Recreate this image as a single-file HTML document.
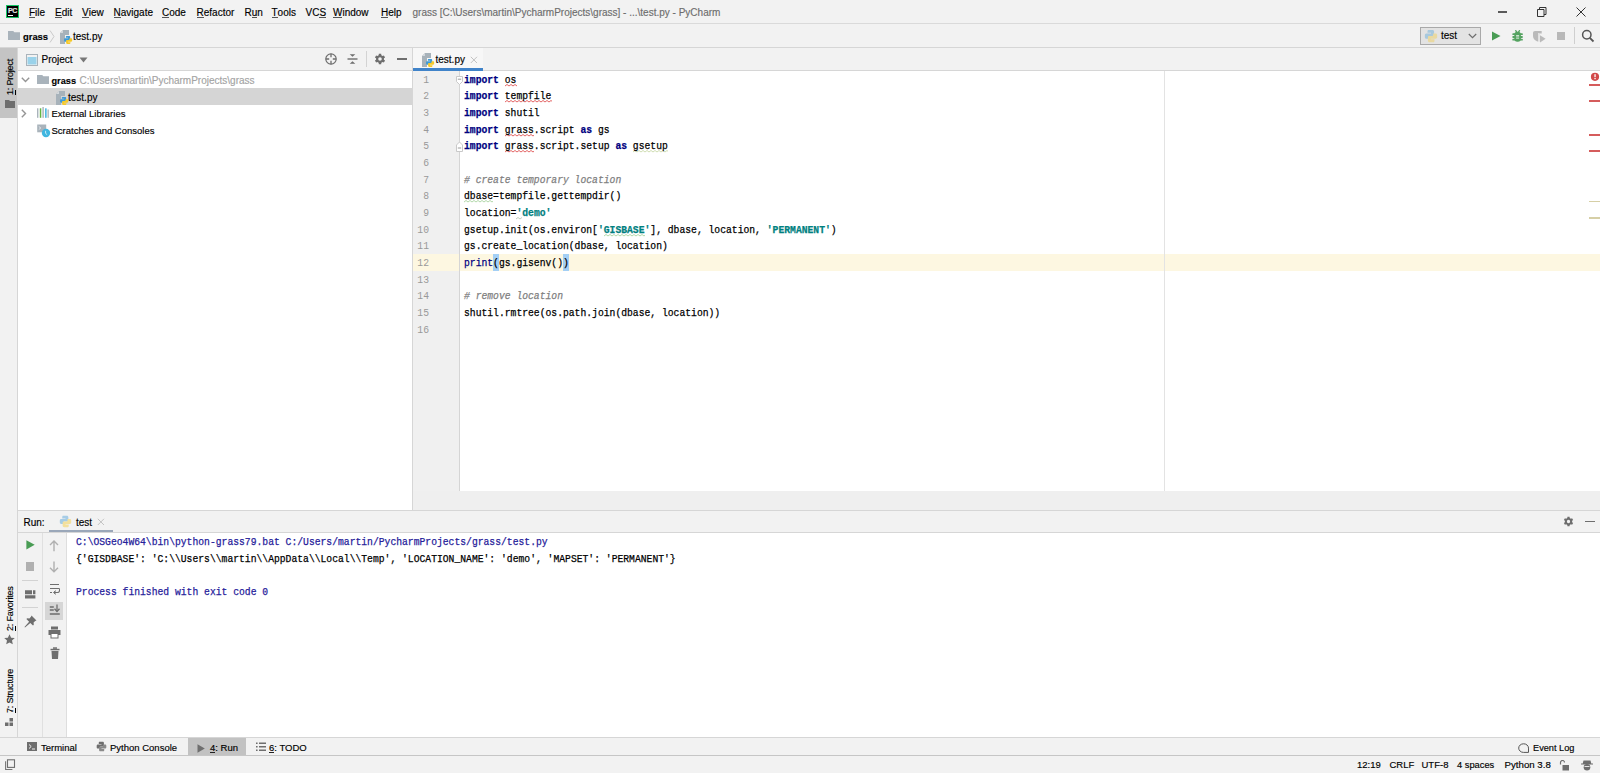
<!DOCTYPE html>
<html><head><meta charset="utf-8">
<style>
*{margin:0;padding:0;box-sizing:border-box}
html,body{width:1600px;height:773px;overflow:hidden;background:#f2f2f2;font-family:"Liberation Sans",sans-serif;font-size:10px;color:#000}
.a{position:absolute}
.t{position:absolute;white-space:pre;line-height:10px;font-size:10px;-webkit-text-stroke:0.15px currentColor}
.hl{position:absolute;background:#d6d6d6}
.m u{text-decoration:none;display:inline-block;line-height:9.2px;border-bottom:1px solid #555}
.code{position:absolute;left:464px;white-space:pre;-webkit-text-stroke:0.25px currentColor;font-family:"Liberation Mono",monospace;font-size:11px;line-height:11px;transform:scaleX(0.882);transform-origin:0 0;color:#000}
.k{color:#000080;font-weight:bold}
.s{color:#008080;font-weight:bold}
.c{color:#808080;font-style:italic}
.ln{position:absolute;left:412px;width:17px;text-align:right;font-family:"Liberation Mono",monospace;font-size:11px;line-height:11px;color:#999;transform:scaleX(0.882);transform-origin:100% 0}
.cons{position:absolute;left:76px;white-space:pre;-webkit-text-stroke:0.25px currentColor;font-family:"Liberation Mono",monospace;font-size:11px;line-height:11px;transform:scaleX(0.882);transform-origin:0 0}
</style></head><body>
<!-- ============ menu bar ============ -->
<div class="hl" style="left:0;top:23px;width:1600px;height:1px;background:#dadada"></div>
<div class="a" style="left:6px;top:5px;width:13px;height:13px;background:#000;border:1px solid #18c566"></div>
<div class="t" style="left:8px;top:6.5px;font-size:7px;line-height:7px;color:#e6e6e6;font-weight:bold;letter-spacing:-0.3px">PC</div>
<div class="a" style="left:8px;top:15px;width:5px;height:1px;background:#fff"></div>
<div class="m">
<div class="t" style="left:29px;top:7.5px"><u>F</u>ile</div>
<div class="t" style="left:55px;top:7.5px"><u>E</u>dit</div>
<div class="t" style="left:82px;top:7.5px"><u>V</u>iew</div>
<div class="t" style="left:113.5px;top:7.5px"><u>N</u>avigate</div>
<div class="t" style="left:162px;top:7.5px"><u>C</u>ode</div>
<div class="t" style="left:196.5px;top:7.5px"><u>R</u>efactor</div>
<div class="t" style="left:244.5px;top:7.5px">R<u>u</u>n</div>
<div class="t" style="left:271.5px;top:7.5px"><u>T</u>ools</div>
<div class="t" style="left:305.5px;top:7.5px">VC<u>S</u></div>
<div class="t" style="left:333px;top:7.5px"><u>W</u>indow</div>
<div class="t" style="left:381px;top:7.5px"><u>H</u>elp</div>
</div>
<div class="t" style="left:412.5px;top:7.5px;color:#6d6d6d">grass [C:\Users\martin\PycharmProjects\grass] - ...\test.py - PyCharm</div>

<!-- ============ nav bar ============ -->
<div class="hl" style="left:0;top:47px;width:1600px;height:1px"></div>
<div class="t" style="left:23px;top:32px;font-weight:bold;font-size:9.4px">grass</div>
<div class="t" style="left:73px;top:32px">test.py</div>
<!-- run config -->
<div class="a" style="left:1420px;top:27px;width:61px;height:18px;background:#e3e3e3;border:1px solid #a9a9a9"></div>
<div class="t" style="left:1441px;top:31px">test</div>

<!-- ============ left strip ============ -->
<div class="hl" style="left:17px;top:48px;width:1px;height:689px"></div>
<div class="a" style="left:0;top:48px;width:17px;height:70px;background:#c4c4c4"></div>

<!-- ============ project panel ============ -->
<div class="a" style="left:18px;top:71px;width:394px;height:439px;background:#fff"></div>
<div class="hl" style="left:18px;top:70px;width:394px;height:1px"></div>
<div class="a" style="left:18px;top:88px;width:394px;height:17px;background:#d5d5d5"></div>
<div class="t" style="left:41.5px;top:55px">Project</div>
<div class="t" style="left:51.5px;top:75.5px;font-weight:bold;font-size:9.2px">grass</div>
<div class="t" style="left:79.5px;top:75.5px;color:#a3a3a3">C:\Users\martin\PycharmProjects\grass</div>
<div class="t" style="left:68px;top:92.7px">test.py</div>
<div class="t" style="left:51.5px;top:108.5px;font-size:9.5px">External Libraries</div>
<div class="t" style="left:51.5px;top:125.5px;font-size:9.5px">Scratches and Consoles</div>

<!-- divider -->
<div class="hl" style="left:412px;top:48px;width:1px;height:462px"></div>

<!-- ============ editor ============ -->
<div class="a" style="left:413px;top:71px;width:1187px;height:420px;background:#fff"></div>
<div class="a" style="left:413px;top:71px;width:46px;height:420px;background:#f0f0f0"></div>
<div class="a" style="left:413px;top:254px;width:1187px;height:17px;background:#fdf7e1"></div>
<div class="hl" style="left:459px;top:71px;width:1px;height:420px;background:#d5d5d5"></div>
<div class="hl" style="left:1164px;top:71px;width:1px;height:420px;background:#e3e3e3"></div>
<div class="hl" style="left:413px;top:70px;width:1187px;height:1px"></div>
<div class="a" style="left:413px;top:68px;width:70px;height:3px;background:#4083c9"></div>
<div class="a" style="left:413px;top:48px;width:70px;height:20px;background:#f7f7f7"></div>
<div class="t" style="left:435.5px;top:55px">test.py</div>
<div class="a" style="left:413px;top:491px;width:1187px;height:19px;background:#efefef"></div>

<!-- waves -->
<div class="a" style="left:493.1px;top:254px;width:5.8px;height:16.7px;background:#a3cff5"></div>
<div class="a" style="left:562.9px;top:254px;width:5.8px;height:16.7px;background:#a3cff5"></div>
<svg class="a" style="left:504.7px;top:83.5px;opacity:1" width="12" height="3"><path d="M0 2 L2 0.5 L4 2 L6 0.5 L8 2 L10 0.5 L12 2" fill="none" stroke="#e05555" stroke-width="0.9"/></svg>
<svg class="a" style="left:504.7px;top:100.2px;opacity:1" width="47" height="3"><path d="M0 2 L2 0.5 L4 2 L6 0.5 L8 2 L10 0.5 L12 2 L14 0.5 L16 2 L18 0.5 L20 2 L22 0.5 L24 2 L26 0.5 L28 2 L30 0.5 L32 2 L34 0.5 L36 2 L38 0.5 L40 2 L42 0.5 L44 2 L46 0.5 L48 2" fill="none" stroke="#e05555" stroke-width="0.9"/></svg>
<svg class="a" style="left:504.7px;top:133.5px;opacity:1" width="29" height="3"><path d="M0 2 L2 0.5 L4 2 L6 0.5 L8 2 L10 0.5 L12 2 L14 0.5 L16 2 L18 0.5 L20 2 L22 0.5 L24 2 L26 0.5 L28 2 L30 0.5" fill="none" stroke="#e05555" stroke-width="0.9"/></svg>
<svg class="a" style="left:504.7px;top:150.2px;opacity:1" width="29" height="3"><path d="M0 2 L2 0.5 L4 2 L6 0.5 L8 2 L10 0.5 L12 2 L14 0.5 L16 2 L18 0.5 L20 2 L22 0.5 L24 2 L26 0.5 L28 2 L30 0.5" fill="none" stroke="#e05555" stroke-width="0.9"/></svg>
<svg class="a" style="left:464.0px;top:200.2px;opacity:1" width="29" height="3"><path d="M0 2 L2 0.5 L4 2 L6 0.5 L8 2 L10 0.5 L12 2 L14 0.5 L16 2 L18 0.5 L20 2 L22 0.5 L24 2 L26 0.5 L28 2 L30 0.5" fill="none" stroke="#a9d4a0" stroke-width="0.9"/></svg>
<svg class="a" style="left:516.4px;top:216.8px;opacity:1" width="6" height="3"><path d="M0 2 L2 0.5 L4 2 L6 0.5" fill="none" stroke="#b8c8b8" stroke-width="0.9"/></svg>
<svg class="a" style="left:603.7px;top:233.5px;opacity:1" width="41" height="3"><path d="M0 2 L2 0.5 L4 2 L6 0.5 L8 2 L10 0.5 L12 2 L14 0.5 L16 2 L18 0.5 L20 2 L22 0.5 L24 2 L26 0.5 L28 2 L30 0.5 L32 2 L34 0.5 L36 2 L38 0.5 L40 2 L42 0.5" fill="none" stroke="#a9d4a0" stroke-width="0.9"/></svg>
<svg class="a" style="left:632.8px;top:150.2px" width="35" height="3"><path d="M0 2 L2 0.5 L4 2 L6 0.5 L8 2 L10 0.5 L12 2 L14 0.5 L16 2 L18 0.5 L20 2 L22 0.5 L24 2 L26 0.5 L28 2 L30 0.5 L32 2 L34 0.5 L36 2" fill="none" stroke="#c9d9a9" stroke-width="0.9"/></svg>
<!-- code -->
<div class="code" style="top:74.7px"><span class="k">import</span> os</div>
<div class="code" style="top:91.4px"><span class="k">import</span> tempfile</div>
<div class="code" style="top:108.0px"><span class="k">import</span> shutil</div>
<div class="code" style="top:124.7px"><span class="k">import</span> grass.script <span class="k">as</span> gs</div>
<div class="code" style="top:141.4px"><span class="k">import</span> grass.script.setup <span class="k">as</span> gsetup</div>
<div class="code" style="top:174.7px"><span class="c"># create temporary location</span></div>
<div class="code" style="top:191.4px">dbase=tempfile.gettempdir()</div>
<div class="code" style="top:208.0px">location=<span class="s">'demo'</span></div>
<div class="code" style="top:224.7px">gsetup.init(os.environ[<span class="s">'GISBASE'</span>], dbase, location, <span class="s">'PERMANENT'</span>)</div>
<div class="code" style="top:241.4px">gs.create_location(dbase, location)</div>
<div class="code" style="top:258.0px"><span style="color:#000080">print</span>(gs.gisenv())</div>
<div class="code" style="top:291.4px"><span class="c"># remove location</span></div>
<div class="code" style="top:308.0px">shutil.rmtree(os.path.join(dbase, location))</div>

<div class="ln" style="top:74.7px">1</div>
<div class="ln" style="top:91.4px">2</div>
<div class="ln" style="top:108.0px">3</div>
<div class="ln" style="top:124.7px">4</div>
<div class="ln" style="top:141.4px">5</div>
<div class="ln" style="top:158.0px">6</div>
<div class="ln" style="top:174.7px">7</div>
<div class="ln" style="top:191.4px">8</div>
<div class="ln" style="top:208.0px">9</div>
<div class="ln" style="top:224.7px">10</div>
<div class="ln" style="top:241.4px">11</div>
<div class="ln" style="top:258.0px">12</div>
<div class="ln" style="top:274.7px">13</div>
<div class="ln" style="top:291.4px">14</div>
<div class="ln" style="top:308.0px">15</div>
<div class="ln" style="top:324.7px">16</div>

<!-- ============ run panel ============ -->
<div class="hl" style="left:18px;top:510px;width:1582px;height:1px"></div>
<div class="hl" style="left:18px;top:532px;width:1582px;height:1px"></div>
<div class="a" style="left:67px;top:533px;width:1533px;height:204px;background:#fff"></div>
<div class="hl" style="left:42px;top:533px;width:1px;height:204px;background:#e0e0e0"></div>
<div class="hl" style="left:66px;top:533px;width:1px;height:204px;background:#dedede"></div>
<div class="t" style="left:23.5px;top:518px">Run:</div>
<div class="t" style="left:76px;top:518px">test</div>
<div class="a" style="left:49px;top:530px;width:64px;height:2px;background:#9aa7b9"></div>

<div class="cons" style="top:536.8px;color:#25209a">C:\OSGeo4W64\bin\python-grass79.bat C:/Users/martin/PycharmProjects/grass/test.py</div>
<div class="cons" style="top:553.6px">{'GISDBASE': 'C:\\Users\\martin\\AppData\\Local\\Temp', 'LOCATION_NAME': 'demo', 'MAPSET': 'PERMANENT'}</div>
<div class="cons" style="top:586.8px;color:#25209a">Process finished with exit code 0</div>

<!-- ============ bottom bar ============ -->
<div class="hl" style="left:0;top:737px;width:1600px;height:1px"></div>
<div class="a" style="left:188px;top:738px;width:58px;height:17px;background:#c2c2c2"></div>
<div class="hl" style="left:0;top:755px;width:1600px;height:1px;background:#c6c6c6"></div>
<div class="t" style="left:41px;top:743px;font-size:9.5px">Terminal</div>
<div class="t" style="left:110px;top:743px;font-size:9.5px">Python Console</div>
<div class="t" style="left:210px;top:743px;font-size:9.5px"><u style="text-decoration:none;display:inline-block;line-height:9px;border-bottom:1px solid #222">4</u>: Run</div>
<div class="t" style="left:269px;top:743px;font-size:9.5px"><u style="text-decoration:none;display:inline-block;line-height:9px;border-bottom:1px solid #222">6</u>: TODO</div>
<div class="t" style="left:1533px;top:743px;font-size:9.2px">Event Log</div>

<!-- status -->
<div class="t" style="left:1357px;top:759.5px;font-size:9.5px">12:19</div>
<div class="t" style="left:1389.5px;top:759.5px;font-size:9.5px">CRLF</div>
<div class="t" style="left:1421.5px;top:759.5px;font-size:9.5px">UTF-8</div>
<div class="t" style="left:1457px;top:759.5px;font-size:9.3px">4 spaces</div>
<div class="t" style="left:1504.5px;top:759.5px;font-size:9.7px">Python 3.8</div>

<!-- ============ ICONS ============ -->
<svg width="0" height="0" style="position:absolute">
<defs>
<symbol id="py" viewBox="0 0 16 16">
<path fill="#3e9ad6" d="M5 1h4.5C10.9 1 11.5 1.6 11.5 3v3.5c0 1-.6 1.5-1.5 1.5H7C6 8 5.5 8.6 5.5 9.5V11H2.8C1.6 11 1 10.3 1 9V7c0-1.2.6-2 1.8-2H8V4.2H4V3c0-1.3.4-2 1-2z"/>
<path fill="#f6c929" transform="rotate(180 8 8)" d="M5 1h4.5C10.9 1 11.5 1.6 11.5 3v3.5c0 1-.6 1.5-1.5 1.5H7C6 8 5.5 8.6 5.5 9.5V11H2.8C1.6 11 1 10.3 1 9V7c0-1.2.6-2 1.8-2H8V4.2H4V3c0-1.3.4-2 1-2z"/>
</symbol>
<symbol id="pyfile" viewBox="0 0 13 14">
<path fill="#a7b2ba" d="M3 0h6v5H5v9H0V3z"/>
<path fill="#d3d8dc" d="M0 3h3V0z"/>
<g transform="translate(3.5 5.3) scale(0.58)"><use href="#py" width="16" height="16"/></g>
</symbol>
<symbol id="pyg" viewBox="0 0 16 16">
<path fill="#6e6e6e" d="M5 1h4.5C10.9 1 11.5 1.6 11.5 3v3.5c0 1-.6 1.5-1.5 1.5H7C6 8 5.5 8.6 5.5 9.5V11H2.8C1.6 11 1 10.3 1 9V7c0-1.2.6-2 1.8-2H8V4.2H4V3c0-1.3.4-2 1-2z"/>
<path fill="#8a8a8a" transform="rotate(180 8 8)" d="M5 1h4.5C10.9 1 11.5 1.6 11.5 3v3.5c0 1-.6 1.5-1.5 1.5H7C6 8 5.5 8.6 5.5 9.5V11H2.8C1.6 11 1 10.3 1 9V7c0-1.2.6-2 1.8-2H8V4.2H4V3c0-1.3.4-2 1-2z"/>
</symbol>
<symbol id="folder" viewBox="0 0 12 9">
<path fill="#a9b3bb" d="M0 0h5.2l1.2 1.3H12V9H0z"/>
</symbol>
<symbol id="gear" viewBox="-6 -6 12 12">
<path fill="#6e6e6e" fill-rule="evenodd" d="M-1.33 -3.77 L-1.16 -5.17 L1.16 -5.17 L1.33 -3.77 L2.60 -3.04 L3.90 -3.59 L5.06 -1.58 L3.93 -0.73 L3.93 0.73 L5.06 1.58 L3.90 3.59 L2.60 3.04 L1.33 3.77 L1.16 5.17 L-1.16 5.17 L-1.33 3.77 L-2.60 3.04 L-3.90 3.59 L-5.06 1.58 L-3.93 0.73 L-3.93 -0.73 L-5.06 -1.58 L-3.90 -3.59 L-2.60 -3.04 Z M0 -1.8 A1.8 1.8 0 1 0 0 1.8 A1.8 1.8 0 1 0 0 -1.8Z"/>
</symbol>
</defs></svg>

<!-- window controls -->
<div class="a" style="left:1498px;top:11.3px;width:9px;height:1.3px;background:#5a5a5a"></div>
<svg class="a" style="left:1536px;top:6px" width="12" height="12"><path d="M1.5 3.5h6.5v7h-6.5z M3.5 3.5v-2h6.5v7h-2" fill="none" stroke="#333" stroke-width="1"/></svg>
<svg class="a" style="left:1575px;top:6px" width="12" height="12"><path d="M1.5 1.5l9 9M10.5 1.5l-9 9" stroke="#333" stroke-width="1"/></svg>

<!-- nav bar icons -->
<svg class="a" style="left:8px;top:31px" width="12" height="9"><use href="#folder"/></svg>
<svg class="a" style="left:49px;top:30px" width="6" height="13"><path d="M1 0.5l4 6-4 6" fill="none" stroke="#c9c9c9" stroke-width="1"/></svg>
<svg class="a" style="left:60px;top:29.5px" width="13" height="14"><use href="#pyfile"/></svg>
<!-- run config icons -->
<svg class="a" style="left:1424px;top:29px;opacity:.35" width="14" height="14"><use href="#py"/></svg>
<svg class="a" style="left:1468px;top:33px" width="9" height="6"><path d="M0.8 1l3.7 3.7 3.7-3.7" fill="none" stroke="#6e6e6e" stroke-width="1.2"/></svg>
<svg class="a" style="left:1491px;top:31px" width="10" height="10"><path d="M1 0.5L9.5 5 1 9.5z" fill="#499c54"/></svg>
<svg class="a" style="left:1508px;top:26px" width="42" height="20">
<g fill="#55a361"><path d="M6.9 4.3l1.2-.3 1.5 2.2 1.5-2.2 1.2.3-1.3 2.6h-2.8z"/><rect x="6.3" y="5.8" width="6.6" height="10" rx="3"/><rect x="4.3" y="7.3" width="10.6" height="1.8" rx=".9"/><rect x="4.3" y="10.1" width="10.6" height="1.8" rx=".9"/><rect x="4.3" y="12.8" width="10.6" height="1.8" rx=".9"/></g>
<rect x="8.1" y="9.2" width="3" height="1.3" fill="#e6f1e7"/><rect x="8.1" y="11.4" width="3" height="1.5" fill="#b5d8ba"/>
<g fill="#bababa"><path d="M27 5h6.7v2.6h-2.4v8.2C27.8 15.5 25 13 25 10V7c0-1.2.8-2 2-2z"/><path d="M32 9.2l5.6 3.6-5.6 3.6z"/></g>
<rect x="30.3" y="7" width="1" height="9" fill="#f2f2f2"/>
</svg>
<div class="a" style="left:1557px;top:32px;width:8px;height:8px;background:#b8b8b8"></div>
<div class="a" style="left:1574px;top:27px;width:1px;height:17px;background:#cfcfcf"></div>
<svg class="a" style="left:1581px;top:29px" width="14" height="14"><circle cx="5.8" cy="5.8" r="4.2" fill="none" stroke="#555" stroke-width="1.5"/><path d="M8.8 8.8l3.7 3.7" stroke="#555" stroke-width="1.8"/></svg>

<!-- project header icons -->
<svg class="a" style="left:25.5px;top:53.5px" width="12" height="12"><rect x="0.5" y="0.5" width="11" height="11" fill="#f2f2f2" stroke="#a9b3bb"/><rect x="1.5" y="3" width="9" height="7.5" fill="#9ad2ea"/></svg>
<svg class="a" style="left:79px;top:57px" width="9" height="6"><path d="M0.5 0.5h8l-4 5z" fill="#777"/></svg>
<svg class="a" style="left:324px;top:52px" width="14" height="14"><circle cx="7" cy="7" r="5.2" fill="none" stroke="#6e6e6e" stroke-width="1.2"/><path d="M7 1.8v3.4M7 8.8v3.4M1.8 7h3.4M8.8 7h3.4" stroke="#6e6e6e" stroke-width="1.3"/></svg>
<svg class="a" style="left:346px;top:52px" width="13" height="14"><path d="M1.5 7h10" stroke="#6e6e6e" stroke-width="1.4"/><path d="M3.7 2.2h5.6L6.5 4.8z M3.7 11.8h5.6L6.5 9.2z" fill="#6e6e6e"/></svg>
<div class="a" style="left:366px;top:51px;width:1px;height:16px;background:#d3d3d3"></div>
<svg class="a" style="left:374px;top:53px" width="12" height="12"><use href="#gear"/></svg>
<div class="a" style="left:397px;top:58.3px;width:10px;height:1.6px;background:#6e6e6e"></div>

<!-- left strip -->
<div class="t" style="left:4.1px;top:95px;transform:rotate(-90deg);transform-origin:0 0;font-size:9px;line-height:12px;letter-spacing:-0.2px"><u style="text-decoration:none;border-bottom:1px solid #000">1</u>: Project</div>
<svg class="a" style="left:5px;top:100px" width="10" height="8"><path d="M0 0h4l1 1h5v7H0z" fill="#6e6e6e"/></svg>
<div class="t" style="left:4.1px;top:631px;transform:rotate(-90deg);transform-origin:0 0;font-size:9px;line-height:12px;letter-spacing:-0.2px"><u style="text-decoration:none;border-bottom:1px solid #000">2</u>: Favorites</div>
<svg class="a" style="left:4px;top:634px" width="11" height="11"><path d="M5.5 0.3l1.6 3.4 3.7.4-2.8 2.5.8 3.7-3.3-1.9-3.3 1.9.8-3.7L.2 4.1l3.7-.4z" fill="#6e6e6e"/></svg>
<div class="t" style="left:4.1px;top:713px;transform:rotate(-90deg);transform-origin:0 0;font-size:9px;line-height:12px;letter-spacing:-0.2px"><u style="text-decoration:none;border-bottom:1px solid #000">7</u>: Structure</div>
<svg class="a" style="left:5px;top:718px" width="9" height="9"><path d="M4.5 0h3.5v3.5H4.5zM0 4.5h3.5V8H0zM4.5 4.5h3.5V8H4.5z" fill="#6e6e6e"/></svg>

<!-- tree icons -->
<svg class="a" style="left:20.5px;top:77px" width="9" height="6"><path d="M0.8 0.8l3.7 3.7 3.7-3.7" fill="none" stroke="#959595" stroke-width="1.4"/></svg>
<svg class="a" style="left:37px;top:75px" width="12" height="9"><use href="#folder"/></svg>
<svg class="a" style="left:55.5px;top:91px" width="13" height="14"><use href="#pyfile"/></svg>
<svg class="a" style="left:21px;top:108.5px" width="6" height="9"><path d="M0.8 0.8l3.7 3.7-3.7 3.7" fill="none" stroke="#959595" stroke-width="1.4"/></svg>
<svg class="a" style="left:37px;top:107px" width="12" height="11"><rect x="0" y="1.3" width="1.4" height="9.5" fill="#a9b3bb"/><rect x="2.8" y="1.3" width="1.5" height="9.5" fill="#62b543"/><rect x="5.4" y="0" width="1.4" height="10.8" fill="#a9b3bb"/><rect x="8.1" y="1.3" width="1.5" height="9.5" fill="#40b6e0"/><rect x="10.5" y="2.5" width="1.3" height="8.3" fill="#a9b3bb"/></svg>
<svg class="a" style="left:37px;top:123.5px" width="14" height="14"><rect x="0.2" y="0.5" width="9" height="7.8" fill="#a9b3bb"/><path d="M1.8 2.5l2 1.5-2 1.5" fill="none" stroke="#e8ecef" stroke-width=".9"/><circle cx="9" cy="9" r="4.2" fill="#40b6e0"/><path d="M8.6 6.8v2.6l1.5 1.2" fill="none" stroke="#d8f0f9" stroke-width=".9"/></svg>

<!-- editor tab icons -->
<svg class="a" style="left:422px;top:52.5px" width="13" height="14"><use href="#pyfile"/></svg>
<svg class="a" style="left:469.5px;top:55.5px" width="8" height="8"><path d="M0.8 0.8l6.2 6.2M7 0.8l-6.2 6.2" stroke="#c2c2c2" stroke-width="1"/></svg>

<!-- fold markers -->
<svg class="a" style="left:456px;top:75.5px" width="8" height="9"><path d="M0.5 0.5h6v5l-3 3-3-3z" fill="#fff" stroke="#c9c9c9"/><path d="M1.8 3.2h3.4" stroke="#9a9a9a"/></svg>
<svg class="a" style="left:456px;top:141px" width="8" height="11"><path d="M0.5 10.5h6V4l-3-3-3 3z" fill="#fff" stroke="#c9c9c9"/><path d="M1.8 7h3.4" stroke="#9a9a9a"/></svg>

<!-- error stripe -->
<svg class="a" style="left:1590px;top:72px" width="10" height="10"><circle cx="5" cy="4.8" r="4.1" fill="#d24a4a"/><rect x="4.4" y="2.2" width="1.3" height="3" fill="#fff"/><rect x="4.4" y="6" width="1.3" height="1.2" fill="#fff"/></svg>
<div class="a" style="left:1589px;top:84px;width:11px;height:2px;background:#d55c5c"></div>
<div class="a" style="left:1589px;top:100.4px;width:11px;height:2px;background:#d55c5c"></div>
<div class="a" style="left:1589px;top:134px;width:11px;height:2px;background:#d55c5c"></div>
<div class="a" style="left:1589px;top:150.3px;width:11px;height:2px;background:#d55c5c"></div>
<div class="a" style="left:1589px;top:200.8px;width:11px;height:1.5px;background:#d6cfa6"></div>
<div class="a" style="left:1589px;top:217.1px;width:11px;height:1.5px;background:#d6cfa6"></div>

<!-- run header icons -->
<svg class="a" style="left:59px;top:514.5px;opacity:.42" width="13" height="13"><use href="#py"/></svg>
<svg class="a" style="left:96.5px;top:518px" width="8" height="8"><path d="M0.8 0.8l6.2 6.2M7 0.8l-6.2 6.2" stroke="#c2c2c2" stroke-width="1"/></svg>
<svg class="a" style="left:1563px;top:516px" width="11" height="11"><use href="#gear"/></svg>
<div class="a" style="left:1585px;top:520.5px;width:10px;height:1.5px;background:#6e6e6e"></div>

<!-- run toolbar -->
<svg class="a" style="left:26px;top:540px" width="9" height="10"><path d="M0.4 0.2L8.7 4.8 0.4 9.4z" fill="#499c54"/></svg>
<div class="a" style="left:26px;top:562px;width:8px;height:8.5px;background:#b0b0b0"></div>
<div class="a" style="left:22px;top:580px;width:16px;height:1px;background:#d3d3d3"></div>
<svg class="a" style="left:25px;top:589.5px" width="11" height="9"><path d="M0 0.3h7v4H0zM8 0.3h2.4v4H8zM0 5.2h10.4v3.2H0z" fill="#6e6e6e"/></svg>
<div class="a" style="left:22px;top:607px;width:16px;height:1px;background:#d3d3d3"></div>
<svg class="a" style="left:23.5px;top:614.5px" width="13" height="13"><path d="M7.5 0.5l5 5-1.3.5-1.6 1.6.2 2.2-.8.8L6.3 7.9 1 12.5l-.5-.5 4.6-5.3L2.4 4 3.2 3.2l2.2.2L7 1.8z" fill="#6e6e6e"/></svg>
<svg class="a" style="left:49px;top:539.5px" width="10" height="12"><path d="M5 1.2v10M1 5l4-4 4 4" fill="none" stroke="#b0b0b0" stroke-width="1.4"/></svg>
<svg class="a" style="left:49px;top:561px" width="10" height="12"><path d="M5 0.5v10M1 6.8l4 4 4-4" fill="none" stroke="#b0b0b0" stroke-width="1.4"/></svg>
<svg class="a" style="left:48.5px;top:583px" width="11" height="13"><path d="M1 1.5h9M1 5.5h9M1 9.5h2" stroke="#6e6e6e" stroke-width="1.2"/><path d="M10 5.5c1 0 1 4-1.5 4H5.5" fill="none" stroke="#6e6e6e" stroke-width="1.2"/><path d="M6.5 7.5l-2 2 2 2" fill="#6e6e6e" stroke="#6e6e6e" stroke-width=".8"/></svg>
<div class="a" style="left:45px;top:601.5px;width:18px;height:18px;background:#d6d6d6"></div>
<svg class="a" style="left:48.5px;top:603.5px" width="12" height="12"><path d="M0.8 3h4M0.8 6h4M0.8 10h10" stroke="#6e6e6e" stroke-width="1.3"/><path d="M8 0.5v6.5" stroke="#6e6e6e" stroke-width="1.3"/><path d="M5.5 4.8L8 7.5l2.5-2.7" fill="none" stroke="#6e6e6e" stroke-width="1.3"/></svg>
<svg class="a" style="left:47.5px;top:626px" width="13" height="13"><rect x="3" y="0.5" width="7" height="3" fill="#6e6e6e"/><rect x="0.5" y="4" width="12" height="5" fill="#6e6e6e"/><rect x="3" y="7.5" width="7" height="4.5" fill="#fff" stroke="#6e6e6e" stroke-width="1"/></svg>
<svg class="a" style="left:49.5px;top:647px" width="10" height="13"><rect x="0.5" y="1.8" width="9" height="1.5" fill="#6e6e6e"/><rect x="3" y="0.3" width="4" height="1.5" fill="#6e6e6e"/><path d="M1.5 4h7l-.5 8H2z" fill="#6e6e6e"/></svg>

<!-- bottom bar icons -->
<svg class="a" style="left:27px;top:741.5px" width="11" height="10"><rect x="0" y="0" width="10" height="9" fill="#6e6e6e"/><path d="M2 2.5l2.2 2-2.2 2" fill="none" stroke="#f2f2f2" stroke-width="1"/><path d="M5 7h3" stroke="#f2f2f2" stroke-width="1"/></svg>
<svg class="a" style="left:96px;top:741px" width="11" height="11"><use href="#pyg"/></svg>
<svg class="a" style="left:197px;top:743.5px" width="9" height="9"><path d="M0.5 0.3L7.8 4.5 0.5 8.7z" fill="#6e6e6e"/></svg>
<svg class="a" style="left:256px;top:741.5px" width="11" height="10"><path d="M0 1.2h1.6M0 4.7h1.6M0 8.2h1.6M3 1.2h7M3 4.7h7M3 8.2h7" stroke="#6e6e6e" stroke-width="1.4"/></svg>
<svg class="a" style="left:1518px;top:743px" width="12" height="11"><path d="M5.5 0.8a4.8 4.3 0 1 0 0 8.6h5v-4.3a4.8 4.3 0 0 0-5-4.3z" fill="none" stroke="#555" stroke-width="1"/></svg>

<!-- status icons -->
<svg class="a" style="left:4px;top:758px" width="13" height="13"><rect x="3.5" y="1.8" width="7" height="7.6" fill="none" stroke="#6e6e6e" stroke-width="1.1"/><path d="M1.6 3.2v8.3h6.8" fill="none" stroke="#777" stroke-width="1.1"/></svg>
<svg class="a" style="left:1559px;top:760px" width="11" height="11"><path d="M1.5 4.5V2.5a2 2 0 0 1 4 0" fill="none" stroke="#6e6e6e" stroke-width="1.2"/><rect x="3.5" y="5" width="6.5" height="5.5" fill="#6e6e6e"/></svg>
<svg class="a" style="left:1581px;top:759px" width="12" height="12"><path d="M2.5 1.5h7l.8 3H1.7zM0 4.5h12v1H0z" fill="#6e6e6e"/><circle cx="6" cy="8.3" r="3.3" fill="#6e6e6e"/><path d="M3.5 7.5h5" stroke="#f2f2f2" stroke-width=".9"/></svg>

</body></html>
